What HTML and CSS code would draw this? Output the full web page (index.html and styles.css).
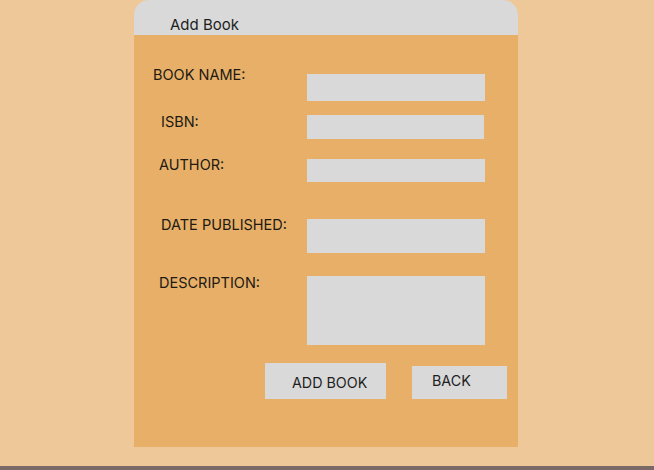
FILE: index.html
```html
<!DOCTYPE html>
<html>
<head>
<meta charset="utf-8">
<link rel="stylesheet" href="styles.css">
</head>
<body>
<main class="page">
  <section class="card">
    <header class="card-header">Add Book</header>
    <form class="card-body">
      <div class="row row-name">
        <label class="label">BOOK NAME:</label>
        <div class="field"></div>
      </div>
      <div class="row row-isbn">
        <label class="label">ISBN:</label>
        <div class="field"></div>
      </div>
      <div class="row row-author">
        <label class="label">AUTHOR:</label>
        <div class="field"></div>
      </div>
      <div class="row row-date">
        <label class="label">DATE PUBLISHED:</label>
        <div class="field"></div>
      </div>
      <div class="row row-desc">
        <label class="label">DESCRIPTION:</label>
        <div class="field"></div>
      </div>
      <div class="actions">
        <div class="btn btn-add">ADD BOOK</div>
        <div class="btn btn-back">BACK</div>
      </div>
    </form>
  </section>
  <footer class="bottom-bar"></footer>
</main>
</body>
</html>
```

FILE: styles.css
```css
html, body {
  margin: 0;
  padding: 0;
}
body {
  background: #eec899;
  font-family: Inter, "Noto Sans", sans-serif;
  color: #1e1e1e;
}
.page {
  display: flex;
  flex-direction: column;
  height: 470px;
}
.card {
  margin-left: 134px;
  width: 384px;
}
.card-header {
  height: 35px;
  box-sizing: border-box;
  background: #d9d9d9;
  border-radius: 15px 15px 0 0;
  padding: 16px 0 0 36px;
  font-size: 15px;
  line-height: 18px;
}
.card-body {
  background: #e8af69;
  margin: 0;
  padding: 31px 0 48px 0;
  display: flex;
  flex-direction: column;
}
.row {
  display: flex;
  align-items: flex-start;
}
.label {
  font-size: 14.5px;
  line-height: 18px;
  color: #201a12;
  box-sizing: border-box;
  width: 173px;
  flex: none;
}
.field {
  background: #d9d9d9;
  width: 178px;
}
.row-name .label { padding-left: 19px; }
.row-name .field { margin-top: 8px; height: 27px; }

.row-isbn { margin-top: 12px; }
.row-isbn .label { padding-left: 27px; }
.row-isbn .field { margin-top: 2px; height: 24px; width: 177px; }

.row-author { margin-top: 17px; }
.row-author .label { padding-left: 25px; }
.row-author .field { margin-top: 3px; height: 23px; }

.row-date { margin-top: 34px; }
.row-date .label { padding-left: 27px; }
.row-date .field { margin-top: 3px; height: 34px; }

.row-desc { margin-top: 21px; }
.row-desc .label { padding-left: 25px; }
.row-desc .field { margin-top: 2px; height: 69px; }

.actions {
  display: flex;
  align-items: flex-end;
  gap: 26px;
  margin-top: 18px;
  padding-left: 131px;
}
.btn {
  background: #d9d9d9;
  box-sizing: border-box;
  font-size: 14.3px;
  line-height: 17px;
  color: #1e1e1e;
}
.btn-add {
  width: 121px;
  height: 36px;
  padding: 11px 0 0 27px;
}
.btn-back {
  width: 95px;
  height: 33px;
  padding: 6px 0 0 20px;
}
.bottom-bar {
  margin-top: auto;
  height: 4px;
  background: #7b6967;
}
```
